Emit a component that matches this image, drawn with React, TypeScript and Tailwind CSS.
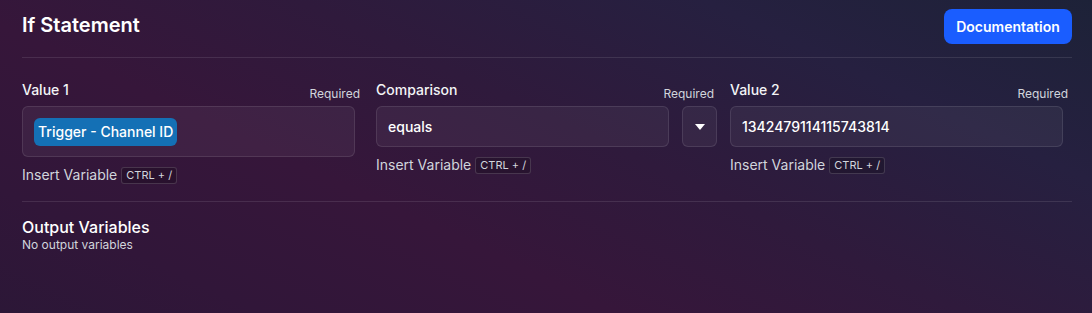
import React from "react";

function Kbd() {
  return (
    <span className="ml-[4px] inline-flex h-[17px] items-center rounded-[3px] border border-white/15 bg-black/20 px-[4px] text-[11px] leading-none text-gray-300">
      CTRL + /
    </span>
  );
}

function InsertRow() {
  return (
    <div className="mt-[8px] flex h-5 items-center text-[14px] leading-5 text-gray-300">
      <span>Insert Variable</span>
      <Kbd />
    </div>
  );
}

function LabelRow({ label }: { label: string }) {
  return (
    <div className="mb-[6px] flex items-end justify-between">
      <span className="text-[14px] font-medium leading-5 text-gray-100">{label}</span>
      <span className="translate-y-[2px] text-[12px] leading-4 text-gray-300">Required</span>
    </div>
  );
}

export default function App() {
  return (
    <div
      className="relative h-[313px] w-full overflow-hidden bg-[linear-gradient(205deg,#1d2238_0%,#262040_22%,#2f1a3c_45%,#36163a_65%,#311639_85%,#2c1737_100%)] pl-[22px] pr-[20px] pt-[9px] text-white"
      style={{ fontFamily: "Inter, 'Noto Sans', sans-serif" }}
    >
      <div className="flex items-start justify-between">
        <h1 className="pt-[2px] text-[20px] font-semibold leading-7 text-white">If Statement</h1>
        <button className="h-[35px] w-[128px] rounded-lg bg-[#1a5dff] text-[14px] font-semibold text-white">
          Documentation
        </button>
      </div>
      <div className="mt-[13px] border-t border-white/10" />

      <div className="grid grid-cols-[338px_338px_338px] gap-x-4 pt-[22px]">
        <div>
          <LabelRow label="Value 1" />
          <div className="flex h-[51px] w-[333px] items-center rounded-md border border-white/10 bg-white/[0.05] px-[11px]">
            <span className="inline-flex h-[28px] items-center rounded-md bg-[#1470b5] px-[4px] text-[14px] font-medium text-white">
              Trigger - Channel ID
            </span>
          </div>
          <InsertRow />
        </div>
        <div>
          <LabelRow label="Comparison" />
          <div className="-mr-[3px] flex gap-[13px]">
            <div className="flex h-[41px] flex-1 items-center rounded-md border border-white/10 bg-white/[0.05] px-[11px] text-[14px] font-medium text-white">
              equals
            </div>
            <button className="flex h-[41px] w-[35px] items-center justify-center rounded-md border border-white/10 bg-white/[0.05]">
              <svg width="10" height="6" viewBox="0 0 10 6">
                <path d="M0 0 L10 0 L5 6 Z" fill="white" />
              </svg>
            </button>
          </div>
          <InsertRow />
        </div>
        <div>
          <LabelRow label="Value 2" />
          <div className="flex h-[41px] w-[333px] items-center rounded-md border border-white/10 bg-white/[0.05] px-[11px] text-[14px] font-medium text-white">
            1342479114115743814
          </div>
          <InsertRow />
        </div>
      </div>

      <div className="mt-4 border-t border-white/10" />
      <div className="pt-[15px]">
        <div className="text-[16px] font-medium leading-5 text-white">Output Variables</div>
        <div className="text-[12px] leading-4 text-gray-300">No output variables</div>
      </div>
    </div>
  );
}
